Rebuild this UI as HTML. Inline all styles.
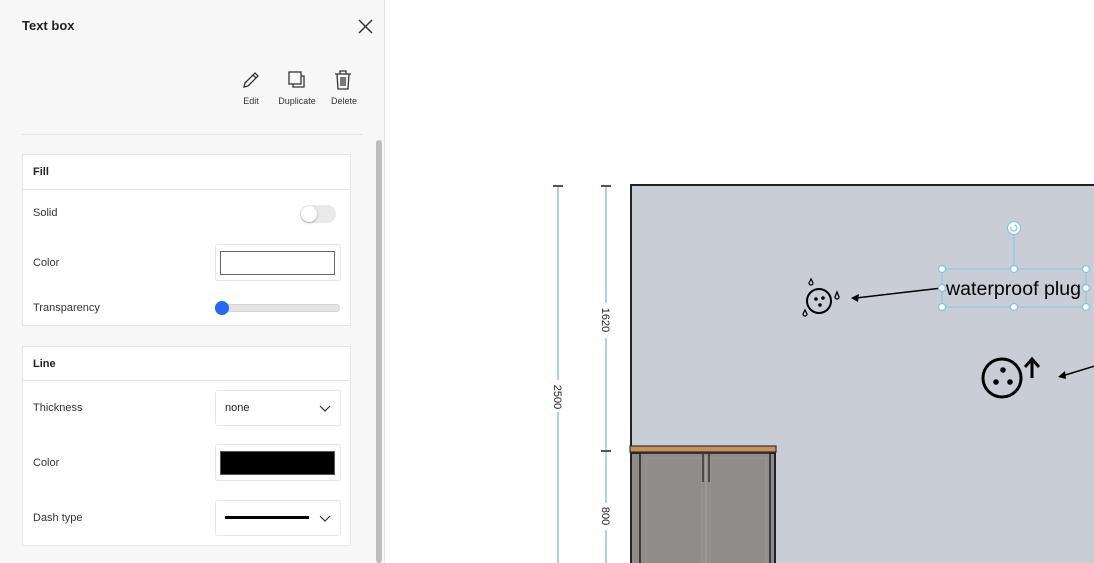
<!DOCTYPE html>
<html><head><meta charset="utf-8"><style>
*{box-sizing:border-box;margin:0;padding:0}
body{width:1094px;height:563px;overflow:hidden;background:#fff;font-family:"Liberation Sans",sans-serif;position:relative;color:#222}
.panel{position:absolute;left:0;top:0;width:385px;height:563px;background:#f7f7f7;border-right:1px solid #e6e6e6}
.abs{position:absolute}
.title{left:22px;top:18px;font-size:13px;font-weight:bold}
.lbl{font-size:11px;color:#333}
.small{font-size:9px;color:#333;text-align:center}
.card{position:absolute;left:22px;width:329px;background:#fff;border:1px solid #e6e6e6}
.hd{height:35px;border-bottom:1px solid #e6e6e6;font-size:11px;font-weight:bold;padding:11px 0 0 10px}
.box{position:absolute;left:192px;width:126px;height:37px;border:1px solid #e6e6e6;border-radius:3px;background:#fff}
</style></head><body>
<div class="panel">
 <div class="abs title">Text box</div>
 <svg class="abs" style="left:358px;top:19px" width="15" height="15"><path d="M1 1L14 14M14 1L1 14" stroke="#333" stroke-width="1.5"/></svg>
 <svg class="abs" style="left:242px;top:71px" width="18" height="18" fill="none" stroke="#333" stroke-width="1.3"><path d="M2 16L3 12L13 2L16 5L6 15Z M11 4L14 7"/></svg>
 <div class="abs small" style="left:236px;top:96px;width:30px">Edit</div>
 <svg class="abs" style="left:288px;top:71px" width="18" height="18" fill="none" stroke="#333" stroke-width="1.3"><rect x="1" y="1" width="12" height="12"/><path d="M13 5H16V16H5V13"/></svg>
 <div class="abs small" style="left:272px;top:96px;width:50px">Duplicate</div>
 <svg class="abs" style="left:334px;top:70px" width="18" height="20" fill="none" stroke="#333" stroke-width="1.3"><path d="M1 4H17M6 4V1H12V4M3 4L4 19H14L15 4M7 7V16M9 7V16M11 7V16"/></svg>
 <div class="abs small" style="left:326px;top:96px;width:36px">Delete</div>
 <div class="abs" style="left:22px;top:134px;width:341px;height:1px;background:#e3e3e3"></div>
 <div class="abs" style="left:376px;top:140px;width:6px;height:423px;background:#bdbdbd;border-radius:3px"></div>

 <div class="card" style="top:154px;height:172px">
  <div class="hd">Fill</div>
  <div class="abs lbl" style="left:10px;top:52px">Solid</div>
  <div class="abs" style="left:277px;top:50px;width:36px;height:18px;border-radius:9px;background:#e9e9e9"><div style="position:absolute;left:1px;top:1px;width:16px;height:16px;border-radius:50%;background:#fff;box-shadow:0 1px 2px rgba(0,0,0,.3)"></div></div>
  <div class="abs lbl" style="left:10px;top:102px">Color</div>
  <div class="box" style="top:89px"><div style="position:absolute;left:4px;top:6px;width:115px;height:24px;border:1px solid #666;background:#fff"></div></div>
  <div class="abs lbl" style="left:10px;top:147px">Transparency</div>
  <div class="abs" style="left:193px;top:149px;width:124px;height:8px;border-radius:4px;background:#e4e4e4;border:1px solid #d4d4d4"></div>
  <div class="abs" style="left:192px;top:146px;width:14px;height:14px;border-radius:50%;background:#2867f5"></div>
 </div>

 <div class="card" style="top:346px;height:200px">
  <div class="hd" style="height:34px">Line</div>
  <div class="abs lbl" style="left:10px;top:55px">Thickness</div>
  <div class="box" style="top:43px;height:36px"><span style="position:absolute;left:9px;top:11px;font-size:11px">none</span><svg style="position:absolute;left:103px;top:14px" width="12" height="8"><path d="M1 1L6 6L11 1" fill="none" stroke="#333" stroke-width="1.2"/></svg></div>
  <div class="abs lbl" style="left:10px;top:110px">Color</div>
  <div class="box" style="top:97px"><div style="position:absolute;left:4px;top:6px;width:115px;height:24px;border:1px solid #555;background:#000"></div></div>
  <div class="abs lbl" style="left:10px;top:165px">Dash type</div>
  <div class="box" style="top:153px;height:36px"><div style="position:absolute;left:9px;top:15px;width:84px;height:3px;background:#000"></div><svg style="position:absolute;left:103px;top:14px" width="12" height="8"><path d="M1 1L6 6L11 1" fill="none" stroke="#333" stroke-width="1.2"/></svg></div>
 </div>
</div>

<svg class="abs" style="left:386px;top:0" width="708" height="563" font-family="Liberation Sans" >
 <g transform="translate(-386,0)">
  <rect x="631" y="185" width="470" height="390" fill="#c9ced6" stroke="#222" stroke-width="2"/>
  <g stroke="#a8d4ea" stroke-width="2">
   <line x1="558" y1="186" x2="558" y2="380"/><line x1="558" y1="412" x2="558" y2="563"/>
   <line x1="606" y1="186" x2="606" y2="303"/><line x1="606" y1="338" x2="606" y2="450"/>
   <line x1="606" y1="452" x2="606" y2="503"/><line x1="606" y1="530" x2="606" y2="563"/>
  </g>
  <g stroke="#555" stroke-width="2"><line x1="553" y1="186" x2="563" y2="186"/><line x1="601" y1="186" x2="611" y2="186"/><line x1="601" y1="451" x2="611" y2="451"/></g>
  <g font-size="11" fill="#222" text-anchor="middle">
   <text transform="translate(554,397) rotate(90)">2500</text>
   <text transform="translate(602,320) rotate(90)">1620</text>
   <text transform="translate(602,516) rotate(90)">800</text>
  </g>
  <rect x="631" y="453" width="144" height="112" fill="#8e8b89" stroke="#222" stroke-width="2"/>
  <rect x="640" y="453" width="130" height="112" fill="#8f8c8a" stroke="#222" stroke-width="1.5"/>
  <rect x="646" y="458" width="56" height="110" fill="none" stroke="#9a9795" stroke-width="1"/>
  <rect x="710" y="458" width="56" height="110" fill="none" stroke="#9a9795" stroke-width="1"/>
  <rect x="630" y="446" width="146" height="6" fill="#c9925a" stroke="#333" stroke-width="1.2"/>
  <line x1="706" y1="455" x2="706" y2="563" stroke="#aaa" stroke-width="1"/>
  <line x1="703" y1="454" x2="703" y2="482" stroke="#333" stroke-width="1.5"/>
  <line x1="709" y1="454" x2="709" y2="482" stroke="#333" stroke-width="1.5"/>
  <circle cx="819" cy="301" r="12" fill="none" stroke="#000" stroke-width="2"/>
  <circle cx="816" cy="299" r="1.8"/><circle cx="823" cy="298" r="1.8"/><circle cx="820" cy="305" r="1.8"/>
  <path d="M811 279L809 283A2 2 0 1 0 813 283Z M837 292L835 297A2 2 0 1 0 839 297Z M805 310L803 314A2 2 0 1 0 807 314Z" fill="none" stroke="#000" stroke-width="1.3"/>
  <line x1="942" y1="288" x2="856" y2="298" stroke="#000" stroke-width="1.5"/>
  <path d="M851 298L859 294L858 302Z" fill="#000"/>
  <line x1="1014" y1="234" x2="1014" y2="269" stroke="#7ec4e0" stroke-width="1"/>
  <rect x="942" y="269" width="144" height="38" fill="none" stroke="#7ec4e0" stroke-width="1"/>
  <text x="946" y="295" font-size="19.5" fill="#000" textLength="135">waterproof plug</text>
  <g fill="#fff" stroke="#7ec4e0" stroke-width="1.2">
   <circle cx="942" cy="269" r="3.5"/><circle cx="1014" cy="269" r="3.5"/><circle cx="1086" cy="269" r="3.5"/>
   <circle cx="942" cy="288" r="3.5"/><circle cx="1086" cy="288" r="3.5"/>
   <circle cx="942" cy="307" r="3.5"/><circle cx="1014" cy="307" r="3.5"/><circle cx="1086" cy="307" r="3.5"/>
   <circle cx="1014" cy="228" r="6.5"/>
  </g>
  <path d="M1011 227A3 3 0 1 0 1014 225" fill="none" stroke="#7ec4e0" stroke-width="1.2"/>
  <circle cx="1002" cy="378" r="19" fill="none" stroke="#000" stroke-width="3"/>
  <circle cx="1003" cy="370" r="2.8"/><circle cx="996" cy="382" r="2.8"/><circle cx="1010" cy="382" r="2.8"/>
  <path d="M1032 378V361M1025 367L1032 359L1039 367" fill="none" stroke="#000" stroke-width="3"/>
  <line x1="1098" y1="365" x2="1062" y2="376" stroke="#000" stroke-width="1.5"/>
  <path d="M1058 377L1065 371L1066 379Z" fill="#000"/>
 </g>
</svg>
</body></html>
